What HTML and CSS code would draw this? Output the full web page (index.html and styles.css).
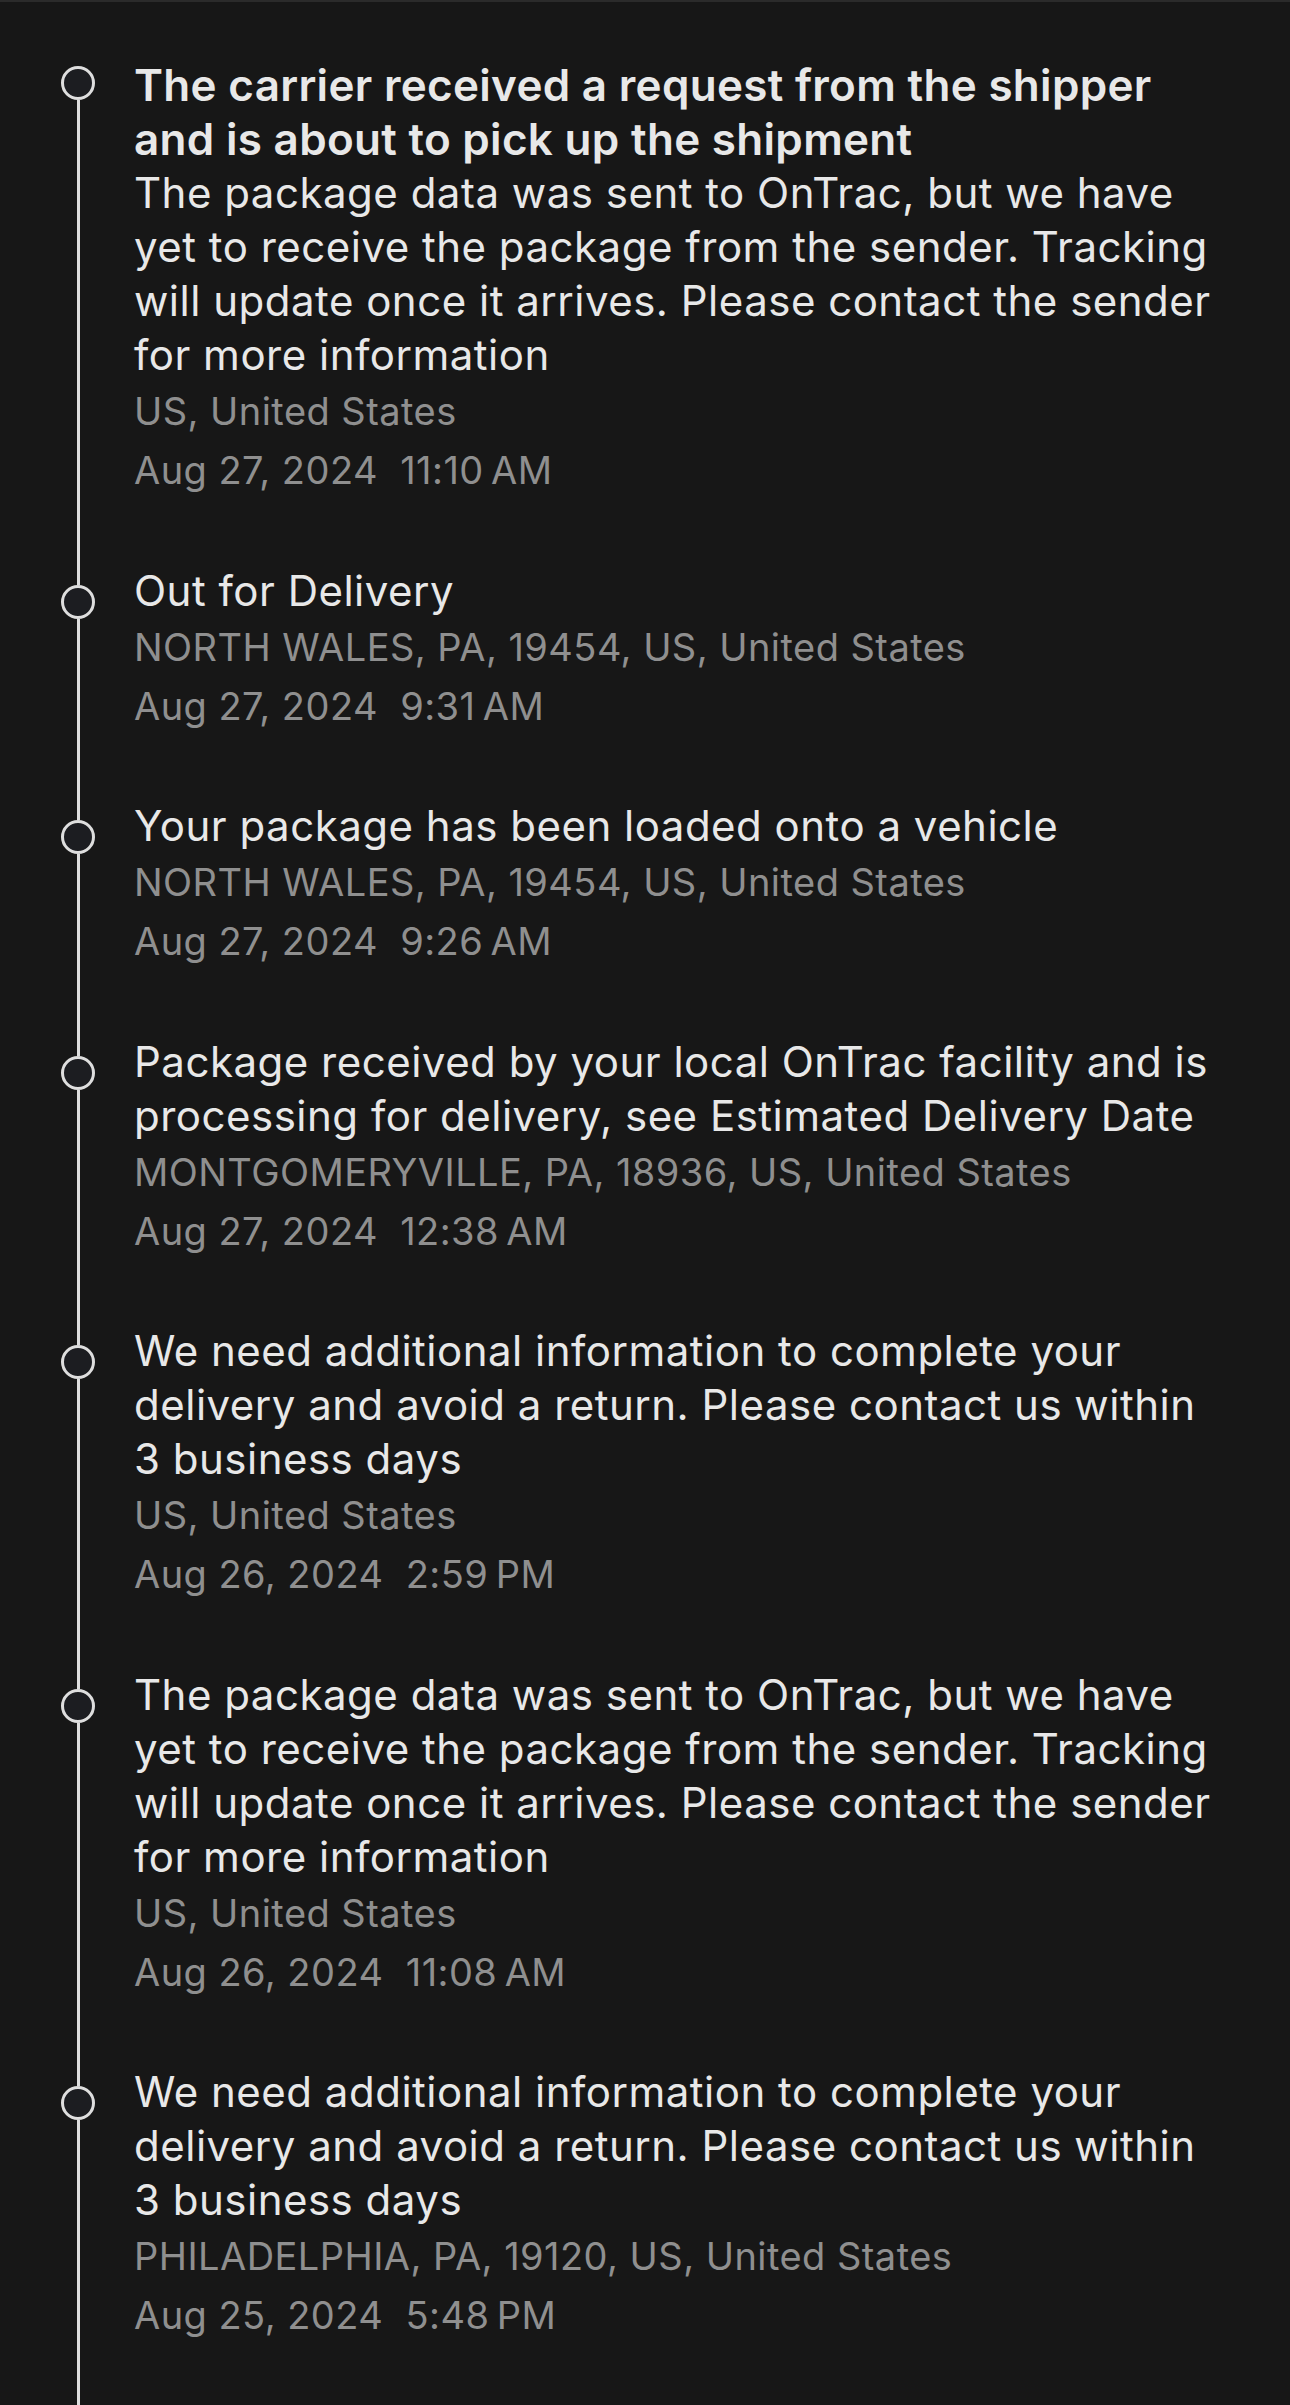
FILE: index.html
```html
<!DOCTYPE html>
<html lang="en">
<head>
<meta charset="utf-8">
<title>Tracking history</title>
<link rel="stylesheet" href="styles.css">
</head>
<body>
<div class="topbar"></div>
<ol class="timeline">
  <li class="event event--first">
    <div class="rail"><span class="seg seg--top"></span><span class="dot"></span><span class="seg seg--bottom"></span></div>
    <div class="content">
      <p class="title title--strong">The carrier received a request from the shipper and is about to pick up the shipment</p>
      <p class="title">The package data was sent to OnTrac, but we have yet to receive the package from the sender. Tracking will update once it arrives. Please contact the sender for more information</p>
      <p class="meta">US, United States</p>
      <p class="meta">Aug 27, 2024&nbsp; 11:10&#8239;AM</p>
    </div>
  </li>
  <li class="event">
    <div class="rail"><span class="seg seg--top"></span><span class="dot"></span><span class="seg seg--bottom"></span></div>
    <div class="content">
      <p class="title">Out for Delivery</p>
      <p class="meta">NORTH WALES, PA, 19454, US, United States</p>
      <p class="meta">Aug 27, 2024&nbsp; 9:31&#8239;AM</p>
    </div>
  </li>
  <li class="event">
    <div class="rail"><span class="seg seg--top"></span><span class="dot"></span><span class="seg seg--bottom"></span></div>
    <div class="content">
      <p class="title">Your package has been loaded onto a vehicle</p>
      <p class="meta">NORTH WALES, PA, 19454, US, United States</p>
      <p class="meta">Aug 27, 2024&nbsp; 9:26&#8239;AM</p>
    </div>
  </li>
  <li class="event">
    <div class="rail"><span class="seg seg--top"></span><span class="dot"></span><span class="seg seg--bottom"></span></div>
    <div class="content">
      <p class="title">Package received by your local OnTrac facility and is processing for delivery, see Estimated Delivery Date</p>
      <p class="meta">MONTGOMERYVILLE, PA, 18936, US, United States</p>
      <p class="meta">Aug 27, 2024&nbsp; 12:38&#8239;AM</p>
    </div>
  </li>
  <li class="event">
    <div class="rail"><span class="seg seg--top"></span><span class="dot"></span><span class="seg seg--bottom"></span></div>
    <div class="content">
      <p class="title">We need additional information to complete your delivery and avoid a return. Please contact us within 3 business days</p>
      <p class="meta">US, United States</p>
      <p class="meta">Aug 26, 2024&nbsp; 2:59&#8239;PM</p>
    </div>
  </li>
  <li class="event">
    <div class="rail"><span class="seg seg--top"></span><span class="dot"></span><span class="seg seg--bottom"></span></div>
    <div class="content">
      <p class="title">The package data was sent to OnTrac, but we have yet to receive the package from the sender. Tracking will update once it arrives. Please contact the sender for more information</p>
      <p class="meta">US, United States</p>
      <p class="meta">Aug 26, 2024&nbsp; 11:08&#8239;AM</p>
    </div>
  </li>
  <li class="event event--last">
    <div class="rail"><span class="seg seg--top"></span><span class="dot"></span><span class="seg seg--bottom"></span></div>
    <div class="content">
      <p class="title">We need additional information to complete your delivery and avoid a return. Please contact us within 3 business days</p>
      <p class="meta">PHILADELPHIA, PA, 19120, US, United States</p>
      <p class="meta">Aug 25, 2024&nbsp; 5:48&#8239;PM</p>
    </div>
  </li>
</ol>
</body>
</html>
```

FILE: styles.css
```css
html, body {
  margin: 0;
  padding: 0;
  background: #171717;
}

body {
  font-family: Inter, "Noto Sans", "Liberation Sans", sans-serif;
  color: #e8e8e8;
  min-height: 100vh;
  display: flex;
  flex-direction: column;
}

.topbar {
  height: 2px;
  background: #2b2b2b;
  flex: none;
}

.timeline {
  list-style: none;
  margin: 0;
  padding: 56px 74px 0 61px;
  display: flex;
  flex-direction: column;
  flex: 1;
}

.event {
  display: flex;
  gap: 39px;
}

.event--last {
  flex: 1;
}

.rail {
  width: 34px;
  flex: none;
  display: flex;
  flex-direction: column;
  align-items: center;
}

.seg {
  width: 3px;
  background: #dedede;
}

.seg--top {
  height: 21px;
  flex: none;
}

.event--first .seg--top {
  height: 8px;
  background: transparent;
}

.seg--bottom {
  flex: 1;
}

.dot {
  width: 28px;
  height: 28px;
  border: 3px solid #dedede;
  border-radius: 50%;
  background: #1c1d21;
  flex: none;
}

.content {
  flex: 1;
  min-width: 0;
  padding-bottom: 63.5px;
}

.content p {
  margin: 0;
}

.title {
  font-size: 42px;
  line-height: 54px;
  letter-spacing: 0.5px;
  color: #e8e8e8;
}

.title--strong {
  font-weight: 600;
  font-size: 44px;
  letter-spacing: 0.3px;
}

.meta {
  font-size: 38px;
  line-height: 59px;
  letter-spacing: 0.45px;
  color: #8f8f8f;
}
```
